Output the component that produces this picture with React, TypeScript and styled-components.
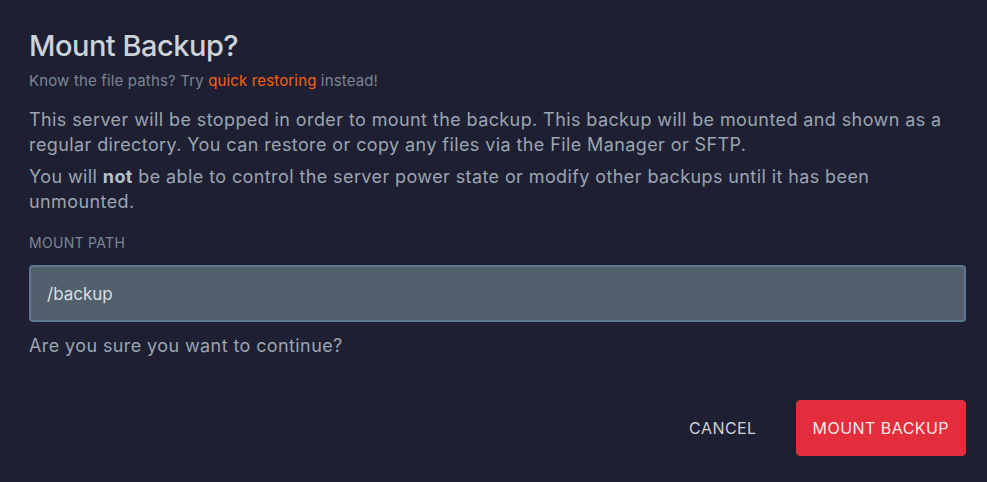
import React from "react";
import styled, { createGlobalStyle } from "styled-components";

const Global = createGlobalStyle`
  html, body { margin: 0; padding: 0; background: #1f1f33; }
  body { font-family: Inter, "Noto Sans", sans-serif; }
`;

const Page = styled.div`
  width: 987px;
  height: 482px;
  box-sizing: border-box;
  background: #1f1f33;
  padding: 28px 21px 0 29px;
  display: flex;
  flex-direction: column;
`;

const Title = styled.h2`
  margin: 0;
  font-size: 29px;
  line-height: 36px;
  font-weight: 500;
  letter-spacing: -0.5px;
  color: #cbd2d9;
`;

const Subtitle = styled.p`
  margin: 7px 0 0;
  font-size: 15px;
  line-height: 20px;
  letter-spacing: 0.15px;
  color: #7b8794;
`;

const Link = styled.span`
  color: #f5620f;
`;

const Body = styled.p`
  margin: 16px 0 0;
  font-size: 18px;
  line-height: 25px;
  letter-spacing: 0.4px;
  color: #9aa5b1;
  & + & { margin-top: 7px; }
  b { color: #b8c2cc; font-weight: 700; letter-spacing: 0.4px; }
`;

const Label = styled.label`
  margin-top: 21px;
  font-size: 14px;
  line-height: 16px;
  letter-spacing: 0.3px;
  text-transform: uppercase;
  color: #7b8794;
`;

const Input = styled.div`
  margin-top: 14px;
  height: 57px;
  box-sizing: border-box;
  background: #52606d;
  border: 2px solid #5e7891;
  border-radius: 4px;
  padding: 0 16px;
  display: flex;
  align-items: center;
  font-size: 17px;
  color: #d9dee3;
`;

const Question = styled.p`
  margin: 11px 0 0;
  font-size: 18px;
  line-height: 25px;
  letter-spacing: 0.4px;
  color: #9aa5b1;
`;

const Actions = styled.div`
  margin-top: 42px;
  display: flex;
  justify-content: flex-end;
  align-items: center;
  gap: 22px;
`;

const Button = styled.button<{ $danger?: boolean }>`
  height: 56px;
  padding: 0 16px;
  border-radius: 4px;
  border: 1px solid ${(p) => (p.$danger ? "#e12d39" : "transparent")};
  background: ${(p) => (p.$danger ? "#e32d3c" : "transparent")};
  color: ${(p) => (p.$danger ? "#fde8e8" : "#cbd2d9")};
  font-family: Inter, "Noto Sans", sans-serif;
  font-size: 16px;
  letter-spacing: 0.45px;
  text-transform: uppercase;
  cursor: pointer;
`;

export default function App() {
  return (
    <>
      <Global />
      <Page>
        <Title>Mount Backup?</Title>
        <Subtitle>
          Know the file paths? Try <Link>quick restoring</Link> instead!
        </Subtitle>
        <Body>
          This server will be stopped in order to mount the backup. This backup will be mounted and shown as a regular
          directory. You can restore or copy any files via the File Manager or SFTP.
        </Body>
        <Body>
          You will <b>not</b> be able to control the server power state or modify other backups until it has been
          unmounted.
        </Body>
        <Label>Mount Path</Label>
        <Input>/backup</Input>
        <Question>Are you sure you want to continue?</Question>
        <Actions>
          <Button>Cancel</Button>
          <Button $danger>Mount Backup</Button>
        </Actions>
      </Page>
    </>
  );
}
